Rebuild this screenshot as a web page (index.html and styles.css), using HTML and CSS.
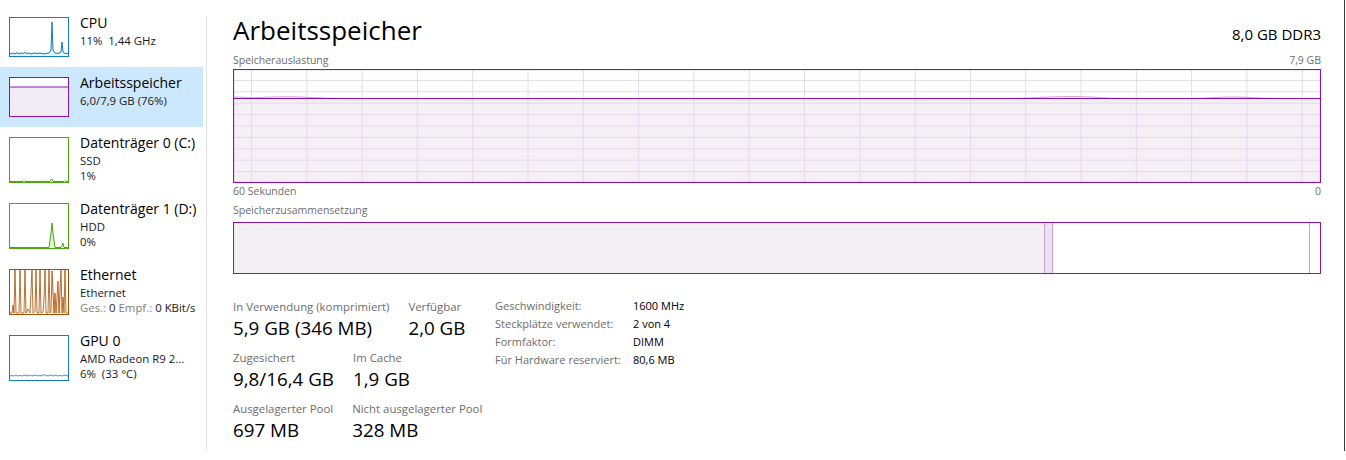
FILE: index.html
```html
<!DOCTYPE html>
<html lang="de">
<head>
<meta charset="utf-8">
<title>Task-Manager – Arbeitsspeicher</title>
<link rel="stylesheet" href="styles.css">
</head>
<body>
<div class="window">
  <aside class="sidebar">
    <div class="list">
      <div class="item">
        <svg class="thumb" viewBox="0 0 60 40" preserveAspectRatio="none">
          <path class="cpu-fill" d="M1,37 L4,36 6,37 8,35.5 10,37 12,36 14,36.5 16,35.5 18,36.5 20,36 22,37 25,36 28,36.5 31,36 34,37 37,36.5 40,36 42,33 43,5 44,33 46,36 49,36.5 52,35 53,25 54,35 56,36.5 59,36.5 L59,39 L1,39 Z"/>
          <polyline class="cpu-line" points="1,37 4,36 6,37 8,35.5 10,37 12,36 14,36.5 16,35.5 18,36.5 20,36 22,37 25,36 28,36.5 31,36 34,37 37,36.5 40,36 42,33 43,5 44,33 46,36 49,36.5 52,35 53,25 54,35 56,36.5 59,36.5"/>
          <rect class="cpu-border" x="0.5" y="0.5" width="59" height="39"/>
        </svg>
        <div class="info">
          <div class="name">CPU</div>
          <div class="sub">11%&nbsp; 1,44 GHz</div>
        </div>
      </div>
      <div class="item selected">
        <svg class="thumb" viewBox="0 0 60 40" preserveAspectRatio="none">
          <rect x="0" y="0" width="60" height="40" fill="#ffffff"/>
          <rect class="mem-fill" x="1" y="10" width="58" height="29"/>
          <line class="mem-line" x1="0" y1="10" x2="60" y2="10"/>
          <rect class="mem-border" x="0.5" y="0.5" width="59" height="39"/>
        </svg>
        <div class="info">
          <div class="name">Arbeitsspeicher</div>
          <div class="sub">6,0/7,9 GB (76%)</div>
        </div>
      </div>
      <div class="item tall">
        <svg class="thumb" viewBox="0 0 60 46" preserveAspectRatio="none">
          <polyline class="disk-line" points="1,44.5 14,44.5 15,43.5 16,44.5 33,44.5 34,43.8 35,44.5 41,44.5 42,42.5 43,42 44,44.5 55,44.5 56,43.5 57,44.5 59,44.5"/>
          <rect class="disk-border" x="0.5" y="0.5" width="59" height="45"/>
        </svg>
        <div class="info">
          <div class="name">Datenträger 0 (C:)</div>
          <div class="sub">SSD</div>
          <div class="sub">1%</div>
        </div>
      </div>
      <div class="item tall">
        <svg class="thumb" viewBox="0 0 60 46" preserveAspectRatio="none">
          <path class="disk-fill" d="M40,44.5 L42,30 43,20 44,30 46,44.5 Z M52,44.5 L54,40 55,44.5 Z"/>
          <polyline class="disk-line" points="1,44.5 40,44.5 42,30 43,20 44,30 46,44.5 52,44.5 54,40 55,44.5 59,44.5"/>
          <rect class="disk-border" x="0.5" y="0.5" width="59" height="45"/>
        </svg>
        <div class="info">
          <div class="name">Datenträger 1 (D:)</div>
          <div class="sub">HDD</div>
          <div class="sub">0%</div>
        </div>
      </div>
      <div class="item tall">
        <svg class="thumb" viewBox="0 0 60 46" preserveAspectRatio="none">
          <path class="eth-fill" d="M43,45 L43,2 47,40 50,20 52,1 52,45 Z"/>
          <polyline class="eth-line" points="1,44 3,44 4,36 5,44 6,1 7,44 10,44 11,1 12,44 15,44 16,1 17,44 19,40 21,44 23,1 24,44 26,42 27,1 28,44 30,44 31,1 32,44 34,43 35,30 36,1 37,44 39,44 40,1 41,44 42,42 43,2 45,44 46,24 47,44 49,12 50,44 52,1 53,44 54,28 55,44 56,1 57,44 59,44"/>
          <rect class="eth-border" x="0.5" y="0.5" width="59" height="45"/>
        </svg>
        <div class="info">
          <div class="name">Ethernet</div>
          <div class="sub">Ethernet</div>
          <div class="sub"><span class="dim">Ges.:</span> 0 <span class="dim">Empf.:</span> 0 KBit/s</div>
        </div>
      </div>
      <div class="item tall">
        <svg class="thumb" viewBox="0 0 60 46" preserveAspectRatio="none">
          <polyline class="gpu-line" points="1,41 3,40.5 5,41 7,40 9,41 11,40.5 13,41 15,40 17,40.5 19,41 21,40 23,41 25,40.5 27,40 29,41 31,40.5 33,41 35,39.5 37,40.5 39,41 41,40 43,40.5 45,41 47,40 49,41 51,40.5 53,41 55,40 57,40.5 59,41"/>
          <rect class="gpu-border" x="0.5" y="0.5" width="59" height="45"/>
        </svg>
        <div class="info">
          <div class="name">GPU 0</div>
          <div class="sub">AMD Radeon R9 2...</div>
          <div class="sub">6%&nbsp; (33 °C)</div>
        </div>
      </div>
    </div>
    <div class="divider"></div>
  </aside>

  <main class="panel">
    <header class="head">
      <h1 class="title">Arbeitsspeicher</h1>
      <div class="spec">8,0 GB DDR3</div>
    </header>

    <div class="caption-row top-cap">
      <span>Speicherauslastung</span>
      <span>7,9 GB</span>
    </div>

    <svg class="graph" viewBox="0 0 1088 114" preserveAspectRatio="none">
      <path class="g-fill" d="M0,28 C10,28 15,29 25,28.6 C45,27.6 60,27.4 80,28.6 C90,29.2 100,29.3 110,29.3 L780,29.3 C800,29.3 810,27.6 840,27.6 C860,27.6 870,29.3 890,29.3 L960,29.3 C975,29.3 985,28 1000,28 C1015,28 1025,29.3 1040,29.3 L1088,29.3 L1088,114 L0,114 Z"/>
      <g class="grid">
        <line x1="0" y1="11.4" x2="1088" y2="11.4"/>
        <line x1="0" y1="22.8" x2="1088" y2="22.8"/>
        <line x1="0" y1="34.2" x2="1088" y2="34.2"/>
        <line x1="0" y1="45.6" x2="1088" y2="45.6"/>
        <line x1="0" y1="57" x2="1088" y2="57"/>
        <line x1="0" y1="68.4" x2="1088" y2="68.4"/>
        <line x1="0" y1="79.8" x2="1088" y2="79.8"/>
        <line x1="0" y1="91.2" x2="1088" y2="91.2"/>
        <line x1="0" y1="102.6" x2="1088" y2="102.6"/>
        <line x1="18.5" y1="0" x2="18.5" y2="114"/>
        <line x1="73.8" y1="0" x2="73.8" y2="114"/>
        <line x1="129.1" y1="0" x2="129.1" y2="114"/>
        <line x1="184.4" y1="0" x2="184.4" y2="114"/>
        <line x1="239.7" y1="0" x2="239.7" y2="114"/>
        <line x1="295" y1="0" x2="295" y2="114"/>
        <line x1="350.3" y1="0" x2="350.3" y2="114"/>
        <line x1="405.6" y1="0" x2="405.6" y2="114"/>
        <line x1="460.9" y1="0" x2="460.9" y2="114"/>
        <line x1="516.2" y1="0" x2="516.2" y2="114"/>
        <line x1="571.5" y1="0" x2="571.5" y2="114"/>
        <line x1="626.8" y1="0" x2="626.8" y2="114"/>
        <line x1="682.1" y1="0" x2="682.1" y2="114"/>
        <line x1="737.4" y1="0" x2="737.4" y2="114"/>
        <line x1="792.7" y1="0" x2="792.7" y2="114"/>
        <line x1="848" y1="0" x2="848" y2="114"/>
        <line x1="903.3" y1="0" x2="903.3" y2="114"/>
        <line x1="958.6" y1="0" x2="958.6" y2="114"/>
        <line x1="1013.9" y1="0" x2="1013.9" y2="114"/>
        <line x1="1069.2" y1="0" x2="1069.2" y2="114"/>
      </g>
      <path class="g-wave" d="M0,28 C10,28 15,29 25,28.6 C45,27.6 60,27.4 80,28.6 C90,29.2 100,29.3 110,29.3 M780,29.3 C800,29.3 810,27.6 840,27.6 C860,27.6 870,29.3 890,29.3 M960,29.3 C975,29.3 985,28 1000,28 C1015,28 1025,29.3 1040,29.3"/>
      <line class="g-line" x1="0" y1="29.5" x2="1088" y2="29.5"/>
      <rect class="g-border" x="0.5" y="0.5" width="1087" height="113"/>
    </svg>

    <div class="caption-row bottom-cap">
      <span>60 Sekunden</span>
      <span>0</span>
    </div>

    <div class="caption-row comp-cap">
      <span>Speicherzusammensetzung</span>
    </div>

    <div class="composition">
      <div class="seg inuse"></div>
      <div class="seg modified"></div>
      <div class="seg standby"></div>
      <div class="seg free"></div>
    </div>

    <section class="stats">
      <div class="stat-groups">
        <div class="stat-row">
          <div class="stat">
            <div class="stat-label">In Verwendung (komprimiert)</div>
            <div class="stat-value">5,9 GB (346 MB)</div>
          </div>
          <div class="stat">
            <div class="stat-label">Verfügbar</div>
            <div class="stat-value">2,0 GB</div>
          </div>
        </div>
        <div class="stat-row">
          <div class="stat">
            <div class="stat-label">Zugesichert</div>
            <div class="stat-value">9,8/16,4 GB</div>
          </div>
          <div class="stat">
            <div class="stat-label">Im Cache</div>
            <div class="stat-value">1,9 GB</div>
          </div>
        </div>
        <div class="stat-row">
          <div class="stat">
            <div class="stat-label">Ausgelagerter Pool</div>
            <div class="stat-value">697 MB</div>
          </div>
          <div class="stat">
            <div class="stat-label">Nicht ausgelagerter Pool</div>
            <div class="stat-value">328 MB</div>
          </div>
        </div>
      </div>
      <dl class="details">
        <dt>Geschwindigkeit:</dt><dd>1600 MHz</dd>
        <dt>Steckplätze verwendet:</dt><dd>2 von 4</dd>
        <dt>Formfaktor:</dt><dd>DIMM</dd>
        <dt>Für Hardware reserviert:</dt><dd>80,6 MB</dd>
      </dl>
    </section>
  </main>
</div>
</body>
</html>
```
FILE: styles.css
```css
* { box-sizing: border-box; }

html, body {
  margin: 0;
  padding: 0;
  background: #ffffff;
}

body {
  font-family: "Segoe UI", "Open Sans", "Noto Sans", sans-serif;
  color: #000000;
  width: 1346px;
  height: 460px;
  overflow: hidden;
}

.window {
  display: flex;
  width: 1345px;
  height: 451px;
  border-right: 1px solid #3a3a3a;
}

/* ---------- sidebar ---------- */
.sidebar {
  display: flex;
  flex: none;
  width: 207px;
}

.list {
  width: 206px;
  padding-top: 7px;
}

.divider {
  width: 1px;
  margin-top: 16px;
  background: #e2e2e2;
}

.item {
  display: flex;
  align-items: flex-start;
  width: 203px;
  height: 60px;
  padding-left: 9px;
}

.item.tall { height: 66px; }

.item.selected { background: #cce8ff; }

.thumb {
  flex: none;
  width: 60px;
  height: 40px;
  margin-top: 10px;
  background: #ffffff;
}

.item.tall .thumb { height: 46px; }

.info {
  margin-left: 11px;
  padding-top: 6px;
  white-space: nowrap;
}

.name {
  font-size: 14px;
  line-height: 20px;
  color: #000000;
}

.sub {
  font-size: 11.4px;
  line-height: 15px;
  color: #1a1a1a;
}

.dim { color: #808080; }

/* thumbnail colours */
.cpu-fill { fill: #e8f2f8; }
.cpu-line { fill: none; stroke: #117dbb; stroke-width: 1; }
.cpu-border { fill: none; stroke: #117dbb; stroke-width: 1; }

.mem-fill { fill: #f1ecf3; }
.mem-line { stroke: #8b12ae; stroke-width: 1; }
.mem-border { fill: none; stroke: #8b12ae; stroke-width: 1; }

.disk-fill { fill: #e3f1d8; }
.disk-line { fill: none; stroke: #4da60c; stroke-width: 1; }
.disk-border { fill: none; stroke: #4da60c; stroke-width: 1; }

.eth-fill { fill: #fbe6d6; }
.eth-line { fill: none; stroke: #a74f01; stroke-width: 0.8; }
.eth-border { fill: none; stroke: #a74f01; stroke-width: 1; }

.gpu-line { fill: none; stroke: #117dbb; stroke-width: 0.8; }
.gpu-border { fill: none; stroke: #117dbb; stroke-width: 1; }

/* ---------- main panel ---------- */
.panel {
  flex: 1;
  min-width: 0;
  padding: 12px 23px 0 26px;
}

.head {
  display: flex;
  justify-content: space-between;
  align-items: baseline;
  height: 41px;
}

.title {
  margin: 0;
  font-size: 26px;
  font-weight: 400;
  line-height: 36px;
  color: #000000;
}

.spec {
  font-size: 15px;
  color: #000000;
}

.caption-row {
  display: flex;
  justify-content: space-between;
  font-size: 10.5px;
  line-height: 15px;
  color: #6d6d6d;
}

.top-cap { height: 16px; }
.bottom-cap { height: 15px; margin-top: 1px; }
.comp-cap { height: 15px; margin-top: 4px; }

.graph {
  display: block;
  width: 1088px;
  height: 114px;
}

.grid line { stroke: #e4d9e9; stroke-width: 1; }
.g-fill { fill: #f4f0f6; }
.g-wave { fill: none; stroke: #c9a5d6; stroke-width: 1; }
.g-line { stroke: #8b12ae; stroke-width: 1.2; }
.g-border { fill: none; stroke: #8b12ae; stroke-width: 1.2; }

.composition {
  display: flex;
  width: 1088px;
  height: 52px;
  margin-top: 4px;
  border: 1px solid #8b12ae;
}

.seg { height: 100%; }
.inuse { width: 810px; background: #f3f0f5; }
.modified {
  width: 9px;
  background: #ece3f1;
  border-left: 1px solid #c8a3d8;
  border-right: 1px solid #c8a3d8;
}
.standby { flex: 1; background: #ffffff; }
.free {
  width: 11px;
  background: #ffffff;
  border-left: 1px solid #c8a3d8;
}

/* ---------- stats ---------- */
.stats {
  display: flex;
  margin-top: 24px;
}

.stat-groups {
  width: 262px;
  flex: none;
}

.stat-row {
  display: flex;
  gap: 19px;
  height: 51px;
}

.stat { white-space: nowrap; }

.stat-label {
  font-size: 11.4px;
  line-height: 17px;
  color: #6d6d6d;
}

.stat-value {
  font-size: 18.8px;
  line-height: 26px;
  color: #000000;
}

.details {
  display: grid;
  grid-template-columns: 138px auto;
  align-content: start;
  margin: -1px 0 0;
  font-size: 11px;
  line-height: 18px;
  white-space: nowrap;
}

.details dt { color: #6d6d6d; }
.details dd { margin: 0; color: #000000; }
```
